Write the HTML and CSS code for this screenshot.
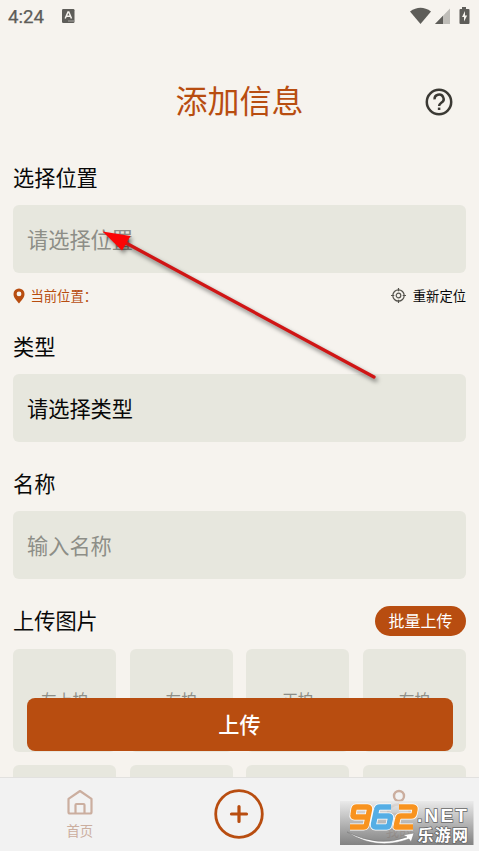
FILE: index.html
```
<!DOCTYPE html>
<html lang="zh-CN">
<head>
<meta charset="utf-8">
<title>添加信息</title>
<link rel="stylesheet" href="styles.css">
</head>
<body>
<div class="app">
  <div class="status">
    <span class="time">4:24</span>
    <svg class="status-app" width="13" height="14" viewBox="0 0 13 14"><rect width="12.5" height="14" rx="1.2" fill="#5e5d59"/><path d="M3.2 9.5 6 3h.8l2.7 6.5M4.4 7.3h4" fill="none" stroke="#f6f3ee" stroke-width="1.5"/><path d="M6.5 12h1m1 0h1m1 0h1" stroke="#f6f3ee"/></svg>
    <svg class="status-icons" width="61" height="18" viewBox="0 0 61 18"><path d="M1 4.500Q11.500-3 22 4.500L11.500 17Z" fill="#5e5d59"/><path d="M26 17 41 1.500V17Z" fill="#bfbdb8"/><path d="M26 17 34 8.700V17Z" fill="#5e5d59"/><path d="M53 0h4v2h2.500q1 0 1 1v13q0 1-1 1h-8q-1 0-1-1V3q0-1 1-1H53Z" fill="#5e5d59"/><path d="m56 4-3 6h2v4.500l3.200-6h-2.200Z" fill="#f6f3ee"/></svg>
  </div>
  <header class="header">
    <h1>添加信息</h1>
    <svg class="help" width="28" height="28" viewBox="0 0 28 28" fill="none" stroke="#3b3934" stroke-width="2.500"><circle cx="14" cy="14" r="12.200"/><path d="M9.600 11.300a4.500 4.300 0 1 1 7 3.200C15.100 15.600 14.100 16 14.100 18"/><path d="M14.100 19.600v2.400"/></svg>
  </header>
  <main class="form">
    <h2>选择位置</h2>
    <div class="field hint">请选择位置</div>
    <div class="location">
      <span class="current"><svg width="12" height="16" viewBox="0 0 12 16"><path fill-rule="evenodd" fill="#b84d10" d="M6 .5a5.500 5.500 0 0 1 5.500 5.500C11.500 9.800 8.300 12.500 6 15.500 3.700 12.500.5 9.800.5 6A5.500 5.500 0 0 1 6 .5ZM6 3.500a2.400 2.400 0 1 0 0 4.800 2.400 2.400 0 0 0 0-4.800Z"/></svg>当前位置：</span>
      <span class="relocate"><svg width="15" height="15" viewBox="0 0 15 15" fill="none" stroke="#55534d" stroke-width="1.200"><circle cx="7.500" cy="7.500" r="5.700"/><circle cx="7.500" cy="7.500" r="2.300"/><path d="M7.500 0v3.300M7.500 11.700V15M0 7.500h3.300M11.700 7.500H15"/></svg>重新定位</span>
    </div>
    <h2>类型</h2>
    <div class="field">请选择类型</div>
    <h2 class="name-title">名称</h2>
    <div class="field hint">输入名称</div>
    <div class="upload-head"><h2>上传图片</h2><span class="batch">批量上传</span></div>
    <div class="tiles">
      <div class="tile">左上拍</div><div class="tile">左拍</div><div class="tile">正拍</div><div class="tile">右拍</div>
      <div class="tile"></div><div class="tile"></div><div class="tile"></div><div class="tile"></div>
    </div>
  </main>
  <div class="submit">上传</div>
  <nav class="tabs">
    <div class="tab"><svg width="28" height="27" viewBox="0 0 28 27" fill="none" stroke="#cbae9f" stroke-width="2.200" stroke-linejoin="round"><path d="M2.500 9.800 14 2l11.500 7.800V23q0 1.500-1.500 1.500H4q-1.500 0-1.500-1.500Z"/><path d="M9.500 24.500V16q0-1 1-1h7q1 0 1 1v8.500"/></svg><span>首页</span></div>
    <div class="tab add"><svg width="50" height="50" viewBox="0 0 50 50" fill="none" stroke="#b84d10"><circle cx="25" cy="25" r="23.300" stroke-width="2.800"/><path d="M25 17.500v15M17.500 25h15" stroke-width="3.200" stroke-linecap="round"/></svg></div>
    <div class="tab"><svg width="28" height="27" viewBox="0 0 28 27" fill="none" stroke="#cbae9f" stroke-width="2.400"><circle cx="14" cy="7" r="5"/><path d="M3 25c0-13 22-13 22 0Z"/></svg><span>我的</span></div>
  </nav>
  <svg class="arrow" width="290" height="170" viewBox="95 220 290 170">
    <path d="M126 243 374 377" stroke="#d01515" stroke-width="3.300" stroke-linecap="round"/>
    <path d="M102.500 231.500 130.500 236 126.500 243 122 250.500Z" fill="#fb0505"/>
  </svg>
  <svg class="watermark" width="135" height="45" viewBox="0 0 135 45">
    <defs><linearGradient id="plate" x2="0" y2="1"><stop stop-color="#e8e8e8"/><stop offset="1" stop-color="#666"/></linearGradient></defs>
    <rect width="133.500" height="44" fill="url(#plate)" opacity=".8"/>
    <path d="M7 31Q39 47 67 36l-4-2 11-2-3 9-2-3Q36 50 7 31Z" fill="#fff" stroke="#777" stroke-width=".5"/>
    <g fill="none" stroke-linejoin="round">
      <g stroke="#fff" stroke-width="7"><path d="M28.500 16H14.500q-2 0-1.500-2l1-6q.5-2 2.500-2h11q2.500 0 2 2.500L26.500 23q-.5 3-3 3H10M51 6H40q-3 0-3.500 3L33.500 23q-.5 3 2 3h11q2 0 2.500-2l1.500-7q.5-2-1.500-2H35.500M59 6h14q2.500 0 2 2.500l-.8 4q-.5 2.500-3 2.500h-10q-3 0-3.500 3L56 26h17"/></g>
      <g stroke-width="5.400"><path stroke="#f8931f" d="M28.500 16H14.500q-2 0-1.500-2l1-6q.5-2 2.500-2h11q2.500 0 2 2.500L26.500 23q-.5 3-3 3H10"/><path stroke="#55aee5" d="M51 6H40q-3 0-3.500 3L33.500 23q-.5 3 2 3h11q2 0 2.500-2l1.500-7q.5-2-1.500-2H35.500"/><path stroke="#f8931f" d="M59 6h14q2.500 0 2 2.500l-.8 4q-.5 2.500-3 2.500h-10q-3 0-3.500 3L56 26h17"/></g>
    </g>
    <text class="net" x="77" y="21">.NET</text>
    <text class="site" x="77.500" y="40">乐游网</text>
  </svg>
</div>
</body>
</html>
```
FILE: styles.css
```
* { box-sizing: border-box; }
body { margin: 0; font-family: "Noto Sans CJK SC", sans-serif; background: #f6f3ee; color: #080808; }
.app { position: relative; width: 479px; height: 851px; overflow: hidden; }
.status { height: 34px; padding: 0 9px 2px 8px; display: flex; align-items: center; color: #5e5d59; }
.time { font: 400 18.700px/32px Roboto, sans-serif; width: 54px; padding-top: 1px; -webkit-text-stroke: .25px #5e5d59; }
.status-icons { margin-left: auto; }
.header { height: 136px; display: grid; grid-template-columns: 1fr auto 1fr; align-items: center; }
.header h1 { grid-column: 2; margin: -6px 0 0; font-size: 32px; line-height: 44px; font-weight: 400; color: #b84d10; }
.help { justify-self: end; margin-right: 26px; }
.form { padding: 0 13px; margin-top: -9px; }
h2 { margin: 0 0 13px; font-size: 21.200px; line-height: 31px; font-weight: 400; }
.field { height: 68px; padding: 0 14px; line-height: 67px; font-size: 21.200px; background: #e7e7de; border-radius: 6px; }
.hint { color: #8d8e87; }
.location { height: 57px; padding-bottom: 12px; display: flex; align-items: center; justify-content: space-between; font-size: 13.300px; line-height: 20px; }
.current, .relocate { display: flex; align-items: center; }
.current { gap: 5.500px; color: #b84d10; }
.relocate { gap: 7px; }
.name-title { margin-top: 25px; }
.upload-head { display: flex; align-items: center; justify-content: space-between; height: 31px; margin: 26px 0 13px; }
.upload-head h2 { margin: -2px 0 0; }
.batch { width: 91px; height: 30px; border-radius: 15px; background: #b84d10; color: #fff; font-size: 16px; line-height: 29px; text-align: center; }
.tiles { display: grid; grid-template-columns: repeat(4, 1fr); grid-auto-rows: 103px; gap: 13px 13.500px; }
.tile { display: flex; align-items: center; justify-content: center; padding-bottom: 2px; background: #e7e7de; border-radius: 6px; font-size: 15.700px; color: #8d8e87; }
.submit { position: absolute; left: 26.500px; right: 26.500px; top: 698px; height: 53px; border-radius: 8px; background: #b84d10; color: #fff; font-size: 21.200px; font-weight: 500; line-height: 51px; text-align: center; }
.tabs { position: absolute; left: 0; right: 0; bottom: 0; height: 74px; display: grid; grid-template-columns: repeat(3, 1fr); background: #f2f2f2; border-top: 1px solid #e2e1df; }
.tab { display: flex; flex-direction: column; align-items: center; padding-top: 11px; font-size: 13.300px; line-height: 19px; color: #cbae9f; }
.tab span { margin-top: 5px; }
.add { justify-content: center; padding: 0 0 1px; }
.arrow { position: absolute; left: 95px; top: 220px; filter: drop-shadow(2px 3px 2px rgba(0, 0, 0, .5)); }
.watermark { position: absolute; left: 340px; top: 801px; }
.net, .site { fill: #fff; stroke: #666; stroke-width: 1.500px; paint-order: stroke; font-weight: 700; }
.net { font-family: "Liberation Sans", sans-serif; font-size: 19px; letter-spacing: 2.200px; }
.site { font-size: 16px; letter-spacing: 1.200px; }
```
